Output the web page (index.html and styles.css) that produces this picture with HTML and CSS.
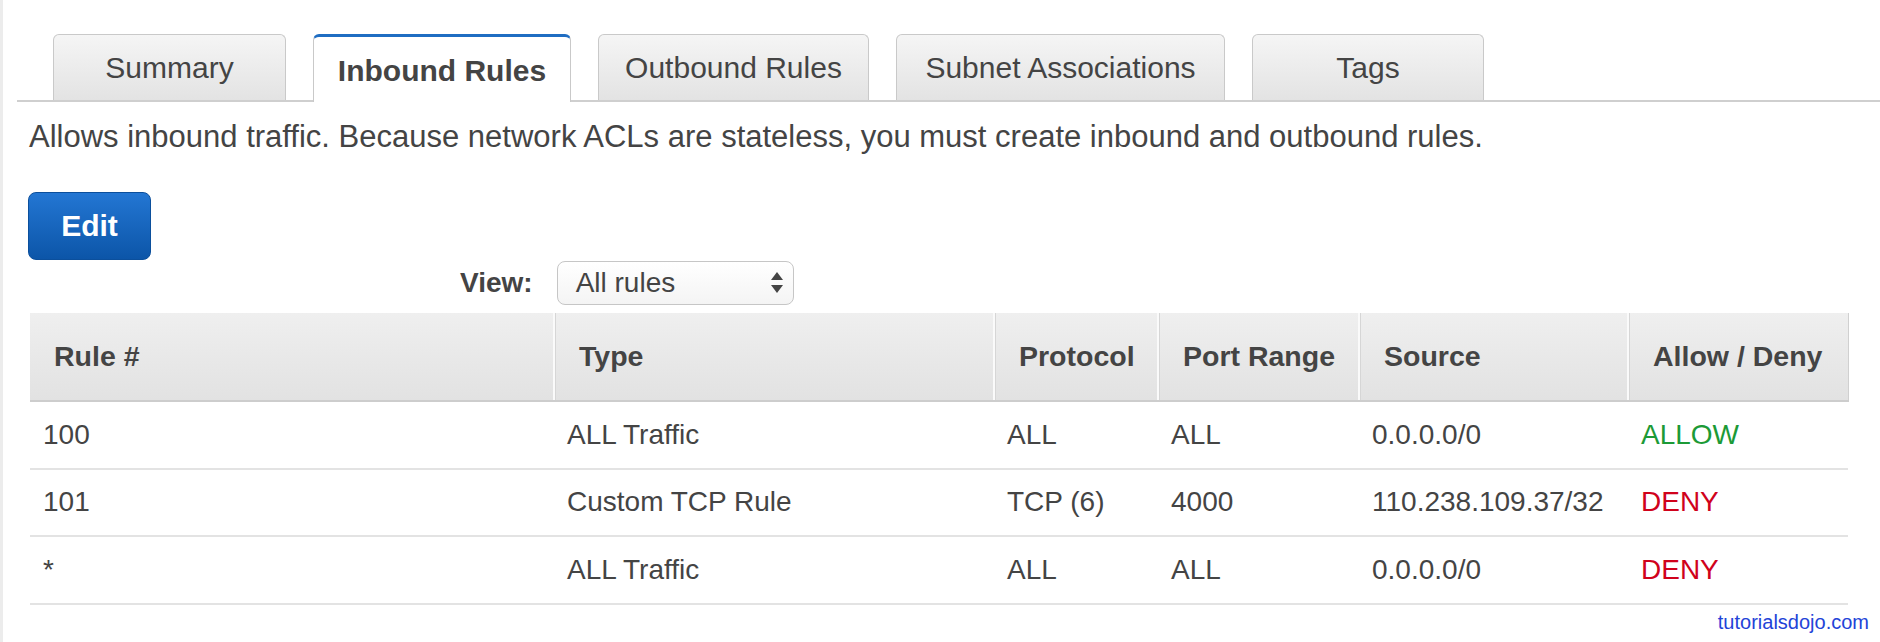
FILE: index.html
```html
<!DOCTYPE html>
<html>
<head>
<meta charset="utf-8">
<link rel="stylesheet" href="styles.css">
</head>
<body>
<div class="page">
  <div class="tabs">
    <div class="tab tab-summary">Summary</div>
    <div class="tab tab-inbound active">Inbound Rules</div>
    <div class="tab tab-outbound">Outbound Rules</div>
    <div class="tab tab-subnet">Subnet Associations</div>
    <div class="tab tab-tags">Tags</div>
  </div>
  <div class="content">
    <p class="desc">Allows inbound traffic. Because network ACLs are stateless, you must create inbound and outbound rules.</p>
    <button class="btn-edit">Edit</button>
    <div class="view-row">
      <span class="view-label">View:</span>
      <div class="select">
        <span class="select-text">All rules</span>
        <svg class="select-arrows" width="12" height="22" viewBox="0 0 12 22"><path d="M6 0 L12 8 L0 8 Z" fill="#444"/><path d="M0 13 L12 13 L6 21 Z" fill="#444"/></svg>
      </div>
    </div>
    <table class="rules">
      <colgroup>
        <col class="c1"><col class="c2"><col class="c3"><col class="c4"><col class="c5"><col class="c6">
      </colgroup>
      <thead>
        <tr><th>Rule #</th><th>Type</th><th>Protocol</th><th>Port Range</th><th>Source</th><th class="last">Allow / Deny</th></tr>
      </thead>
      <tbody>
        <tr><td>100</td><td>ALL Traffic</td><td>ALL</td><td>ALL</td><td>0.0.0.0/0</td><td class="allow">ALLOW</td></tr>
        <tr><td>101</td><td>Custom TCP Rule</td><td>TCP (6)</td><td>4000</td><td>110.238.109.37/32</td><td class="deny">DENY</td></tr>
        <tr><td>*</td><td>ALL Traffic</td><td>ALL</td><td>ALL</td><td>0.0.0.0/0</td><td class="deny">DENY</td></tr>
      </tbody>
    </table>
    <div class="credit"><span>tutorialsdojo.com</span></div>
  </div>
</div>
</body>
</html>
```

FILE: styles.css
```css
html, body {
  margin: 0;
  padding: 0;
  background: #fff;
}
body {
  font-family: "Liberation Sans", Arial, Helvetica, sans-serif;
  color: #444;
}
.page {
  border-left: 3px solid #ececec;
  min-height: 642px;
  box-sizing: border-box;
}
.tabs {
  display: flex;
  align-items: flex-end;
  gap: 27px;
  margin-left: 14px;
  padding-left: 36px;
  padding-top: 34px;
  border-bottom: 2px solid #cfcfcf;
}
.tab {
  box-sizing: border-box;
  height: 66px;
  line-height: 65px;
  text-align: center;
  font-size: 30px;
  color: #444;
  background: linear-gradient(#f5f5f5, #e3e3e3);
  border: 1px solid #c9c9c9;
  border-bottom: none;
  border-radius: 6px 6px 0 0;
  white-space: nowrap;
}
.tab.active {
  height: 68px;
  margin-bottom: -2px;
  padding-top: 2px;
  line-height: 63px;
  background: #fff;
  border-top: 3px solid #1f6dc2;
  font-weight: bold;
}
.tab-summary { width: 233px; }
.tab-inbound { width: 258px; }
.tab-outbound { width: 271px; }
.tab-subnet { width: 329px; }
.tab-tags { width: 232px; }

.content {
  padding-left: 25px;
}
.desc {
  margin: 17px 0 0 1px;
  font-size: 31px;
  line-height: 36px;
}
.btn-edit {
  display: block;
  margin-top: 37px;
  width: 123px;
  height: 68px;
  padding: 0;
  border: 1px solid #0b4f9c;
  border-radius: 8px;
  background: linear-gradient(#2376d3, #0c55a8);
  color: #fff;
  font-family: "Liberation Sans", Arial, sans-serif;
  font-size: 30px;
  font-weight: bold;
}
.view-row {
  display: flex;
  align-items: center;
  gap: 24px;
  margin-left: 432px;
  height: 45px;
}
.view-label {
  font-size: 28px;
  font-weight: bold;
}
.select {
  box-sizing: border-box;
  width: 237px;
  height: 44px;
  border: 1px solid #c6c6c6;
  border-radius: 8px;
  background: linear-gradient(#ffffff, #f4f4f4);
  display: flex;
  align-items: center;
  justify-content: space-between;
  padding: 0 10px 0 18px;
}
.select-text {
  font-size: 28px;
}
.rules {
  margin-top: 8px;
  margin-left: 2px;
  border-collapse: collapse;
  table-layout: fixed;
  width: 1818px;
}
.c1 { width: 524px; }
.c2 { width: 440px; }
.c3 { width: 164px; }
.c4 { width: 201px; }
.c5 { width: 269px; }
.c6 { width: 220px; }
.rules th {
  height: 87px;
  padding: 0 0 0 24px;
  text-align: left;
  font-size: 28.5px;
  font-weight: bold;
  color: #444;
  background: linear-gradient(#efefef, #e2e2e2);
  border-bottom: 2px solid #cdcdcd;
  border-left: 2px solid #fafafa;
  box-shadow: inset 1px 0 0 #d6d6d6;
}
.rules th:first-child {
  border-left: none;
  box-shadow: none;
}
.rules th.last {
  border-right: 1px solid #d0d0d0;
}
.rules td {
  height: 65.5px;
  padding: 0 0 0 13px;
  font-size: 28px;
  color: #444;
  border-bottom: 2px solid #e3e3e3;
  white-space: nowrap;
}
.rules td.allow { color: #1c9a36; }
.rules td.deny { color: #d0021b; }
.credit {
  display: flex;
  justify-content: flex-end;
  padding-right: 11px;
  margin-top: 5px;
}
.credit span {
  font-size: 20px;
  line-height: 24px;
  color: #2343d8;
}
```
